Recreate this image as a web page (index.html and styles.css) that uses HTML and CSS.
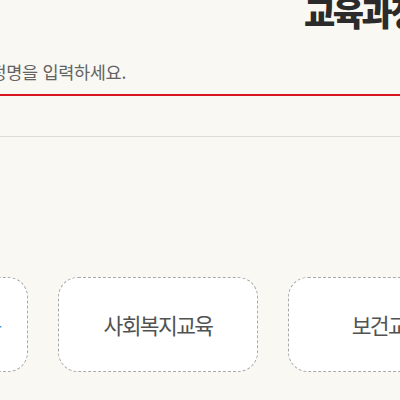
FILE: index.html
```html
<!DOCTYPE html>
<html lang="ko">
<head>
<meta charset="utf-8">
<title>교육과정 검색</title>
<link rel="stylesheet" href="styles.css">
</head>
<body>
<div class="page">
  <h2 class="title">교육과정 검색</h2>
  <div class="search-bar">
    <input class="search-input" type="text" placeholder="교육과정명을 입력하세요.">
  </div>
  <hr class="divider">
  <div class="cards">
    <a class="card card-active">장기요양기관교육</a>
    <a class="card">사회복지교육</a>
    <a class="card">보건교육</a>
  </div>
</div>
</body>
</html>
```
FILE: styles.css
```css
html, body {
  margin: 0;
  padding: 0;
}
body {
  background: #f9f8f3;
  overflow: hidden;
  font-family: "Noto Sans CJK KR", "Noto Sans", sans-serif;
  width: 400px;
  height: 400px;
}
.page {
  display: flex;
  flex-direction: column;
}
.title {
  margin: -5px 0 0 0;
  padding-left: 304px;
  font-size: 34px;
  line-height: 34px;
  font-weight: 900;
  letter-spacing: -2.5px;
  color: #2b2b2b;
  white-space: nowrap;
}
.search-bar {
  margin-top: 30px;
  border-bottom: 2px solid #d9161f;
}
.search-input {
  display: block;
  box-sizing: border-box;
  width: 470px;
  height: 35px;
  margin-left: -57px;
  padding: 0 0 10px 0;
  border: none;
  outline: none;
  background: transparent;
  font-family: "Noto Sans CJK KR", "Noto Sans", sans-serif;
  font-size: 17.5px;
  letter-spacing: -0.3px;
  color: #333;
}
.search-input::placeholder {
  color: #636363;
  opacity: 1;
}
.divider {
  margin: 40px 0 0 0;
  border: none;
  border-top: 1px solid #dddcd8;
  height: 0;
}
.cards {
  display: flex;
  gap: 30px;
  margin-top: 140px;
  margin-left: -172px;
}
.card {
  flex: 0 0 auto;
  box-sizing: border-box;
  width: 200px;
  height: 95px;
  display: flex;
  align-items: center;
  justify-content: center;
  background: #fff;
  border: 1px dashed #a9a9a9;
  border-radius: 20px;
  font-size: 21.5px;
  letter-spacing: -1.6px;
  color: #525252;
  white-space: nowrap;
}
.card-active {
  color: #4a94dc;
}
```
